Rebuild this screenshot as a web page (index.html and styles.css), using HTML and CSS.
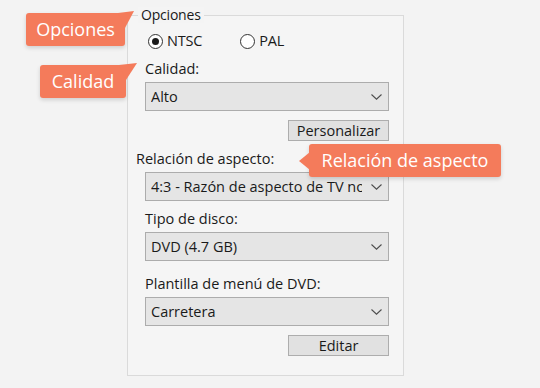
FILE: index.html
```html
<!DOCTYPE html>
<html lang="es">
<head>
<meta charset="utf-8">
<title>Opciones</title>
<link rel="stylesheet" href="styles.css">
</head>
<body>
<div class="stage">
  <div class="panel">
    <span class="legend">Opciones</span>
    <div class="radios">
      <label class="radio"><span class="dot checked"></span>NTSC</label>
      <label class="radio pal"><span class="dot"></span>PAL</label>
    </div>

    <div class="label l-calidad">Calidad:</div>
    <div class="select"><span class="val">Alto</span><svg class="chev" width="11" height="6" viewBox="0 0 11 6"><path d="M0.5 0.5 L5.5 5.2 L10.5 0.5" fill="none" stroke="#4d4d4d" stroke-width="1.1"/></svg></div>
    <div class="btnrow b1"><span class="btn">Personalizar</span></div>

    <div class="label l-rel">Relación de aspecto:</div>
    <div class="select"><span class="val">4:3 - Razón de aspecto de TV normal</span><svg class="chev" width="11" height="6" viewBox="0 0 11 6"><path d="M0.5 0.5 L5.5 5.2 L10.5 0.5" fill="none" stroke="#4d4d4d" stroke-width="1.1"/></svg></div>

    <div class="label l-tipo">Tipo de disco:</div>
    <div class="select"><span class="val">DVD (4.7 GB)</span><svg class="chev" width="11" height="6" viewBox="0 0 11 6"><path d="M0.5 0.5 L5.5 5.2 L10.5 0.5" fill="none" stroke="#4d4d4d" stroke-width="1.1"/></svg></div>

    <div class="label l-plant">Plantilla de menú de DVD:</div>
    <div class="select"><span class="val">Carretera</span><svg class="chev" width="11" height="6" viewBox="0 0 11 6"><path d="M0.5 0.5 L5.5 5.2 L10.5 0.5" fill="none" stroke="#4d4d4d" stroke-width="1.1"/></svg></div>
    <div class="btnrow b2"><span class="btn">Editar</span></div>
  </div>

  <div class="callout c-opciones">Opciones</div>
  <svg class="tip t-opciones" width="20" height="20" viewBox="0 0 20 20"><polygon points="0,2 16,0 7,17" fill="#f47b5b"/></svg>

  <div class="callout c-calidad">Calidad</div>
  <svg class="tip t-calidad" width="20" height="20" viewBox="0 0 20 20"><polygon points="0,2 18,0 7,17" fill="#f47b5b"/></svg>

  <div class="callout c-rel">Relación de aspecto</div>
  <svg class="tip t-rel" width="12" height="20" viewBox="0 0 12 20"><polygon points="11,1 0,10 11,19" fill="#f47b5b"/></svg>
</div>
</body>
</html>
```

FILE: styles.css
```css
html, body {
  margin: 0;
  padding: 0;
  background: #f3f3f3;
}
body {
  width: 540px;
  height: 388px;
  overflow: hidden;
  font-family: "Open Sans", "Noto Sans", sans-serif;
  color: #1a1a1a;
}
.stage {
  position: relative;
  width: 540px;
  height: 388px;
  padding-top: 15px;
  box-sizing: border-box;
}
.panel {
  position: relative;
  margin-left: 127px;
  width: 277px;
  box-sizing: border-box;
  border: 1px solid #dadada;
  background: #f5f5f5;
  padding: 17px 15px 19px 17px;
  font-size: 14.5px;
}
.legend {
  position: absolute;
  top: -9px;
  left: 10px;
  padding: 0 3px;
  background: #f4f4f4;
  line-height: 16px;
  font-size: 14px;
  letter-spacing: -0.2px;
}
.radios {
  display: flex;
  align-items: center;
  height: 16px;
  padding-left: 3px;
}
.radio {
  display: flex;
  align-items: center;
  line-height: 16px;
  letter-spacing: -0.2px;
}
.radio.pal {
  margin-left: 38px;
}
.dot {
  width: 15px;
  height: 15px;
  box-sizing: border-box;
  border: 1px solid #333;
  border-radius: 50%;
  background: #fff;
  margin-right: 4px;
  display: flex;
  align-items: center;
  justify-content: center;
}
.dot.checked::after {
  content: "";
  width: 7px;
  height: 7px;
  border-radius: 50%;
  background: #1a1a1a;
}
.label {
  height: 20px;
  line-height: 20px;
}
.l-calidad { margin-top: 10px; margin-bottom: 3px; }
.l-rel { margin-top: 8px; margin-bottom: 3px; margin-left: -9px; }
.l-tipo { margin-top: 8px; margin-bottom: 3px; }
.l-plant { margin-top: 13px; margin-bottom: 3px; }
.select {
  width: 244px;
  height: 29px;
  box-sizing: border-box;
  border: 1px solid #acacac;
  background: #e5e5e5;
  display: flex;
  align-items: center;
  padding: 0 6px 0 5px;
}
.val {
  flex: 1;
  min-width: 0;
  overflow: hidden;
  white-space: nowrap;
  margin-right: 9px;
}
.chev {
  flex: none;
}
.btnrow {
  display: flex;
  justify-content: flex-end;
  width: 244px;
}
.b1 { margin-top: 9px; }
.b2 { margin-top: 9px; }
.btn {
  width: 101px;
  height: 21px;
  box-sizing: border-box;
  border: 1px solid #adadad;
  background: #e1e1e1;
  display: flex;
  align-items: center;
  justify-content: center;
  line-height: 19px;
}
.callout {
  position: absolute;
  background: #f47b5b;
  color: #fff;
  font-weight: 500;
  font-size: 18px;
  line-height: 33px;
  height: 33px;
  padding: 0;
  border-radius: 3px;
  box-shadow: 0 2px 4px rgba(0, 0, 0, 0.15);
  white-space: nowrap;
  text-align: center;
}
.c-opciones { left: 26px; top: 13px; width: 99px; }
.c-calidad { left: 40px; top: 65px; width: 86px; }
.c-rel { left: 309px; top: 144px; width: 192px; }
.tip { position: absolute; }
.t-opciones { left: 118px; top: 11px; }
.t-calidad { left: 119px; top: 63px; }
.t-rel { left: 299px; top: 151px; }
```
